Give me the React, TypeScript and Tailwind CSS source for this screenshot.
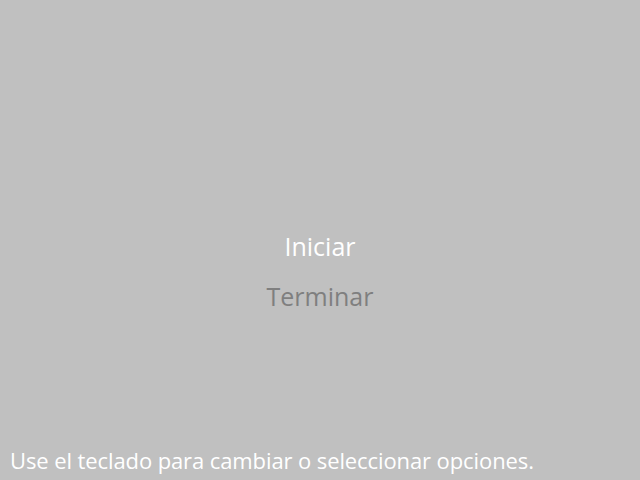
export default function App() {
  return (
    <div className="relative h-[480px] w-[640px] overflow-hidden bg-[#c0c0c0] font-['Open_Sans',sans-serif]">
      <div className="flex h-full flex-col items-center justify-center gap-[14px] pt-[62px]">
        <div className="text-[25px] leading-[36px] text-white">Iniciar</div>
        <div className="text-[25px] leading-[36px] text-[#7f7f7f]">Terminar</div>
      </div>
      <div className="absolute bottom-[6px] left-[10px] text-[22px] leading-[28px] tracking-[-0.1px] text-white">
        Use el teclado para cambiar o seleccionar opciones.
      </div>
    </div>
  )
}
